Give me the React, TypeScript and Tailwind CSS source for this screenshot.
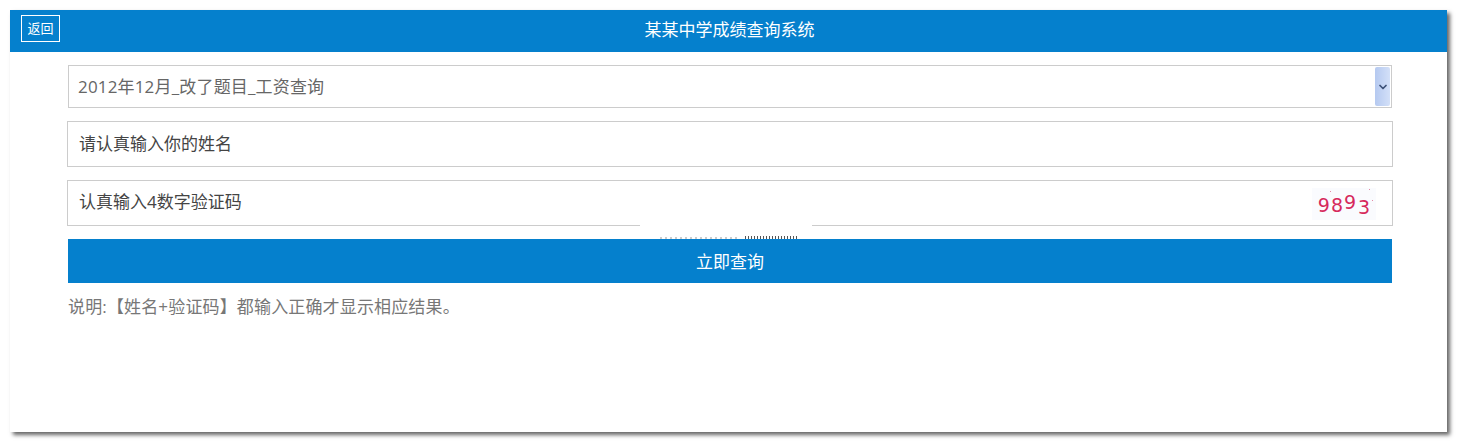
import { ChevronDown } from "lucide-react";

const font = "font-['Open_Sans','Noto_Sans_CJK_SC',sans-serif]";

function Captcha() {
  return (
    <div className="relative flex h-[32px] w-[64px] translate-y-[1px] items-center justify-center gap-[1px] bg-[#fafbfe] font-['DejaVu_Sans',sans-serif] text-[19px] leading-none text-[#d6295c]">
      <span className="translate-y-[1px]">9</span>
      <span className="translate-y-[1px]">8</span>
      <span className="-translate-y-[2px]">9</span>
      <span className="translate-y-[3px] pl-[1px]">3</span>
      <span className="absolute left-[18px] top-[3px] h-[1px] w-[1px] bg-[#e58aa5]" />
      <span className="absolute right-[3px] top-[12px] h-[1px] w-[1px] bg-[#e58aa5]" />
      <span className="absolute right-[6px] top-[1px] h-[1px] w-[1px] bg-[#e58aa5]" />
    </div>
  );
}

export default function App() {
  return (
    <div className={`h-[443px] w-[1457px] overflow-hidden bg-white pl-[10px] pt-[10px] ${font}`}>
      <div className="relative h-[422px] w-[1437px] bg-white shadow-[3px_3px_4px_#666]">
        <div className="relative flex h-[42px] items-center justify-center bg-[#0580cd] pl-[2px] text-[17px] text-white">
          <button className="absolute left-[11px] top-[5px] flex h-[27px] w-[39px] items-center justify-center border border-white text-[13px] text-white">
            返回
          </button>
          <span className="-translate-y-[1px]">某某中学成绩查询系统</span>
        </div>

        <div className="flex flex-col gap-[13px] pl-[57px] pt-[13px]">
          <div className="ml-[1px] flex h-[43px] w-[1324px] items-center justify-between border border-[#ccc] pl-[9px] pr-[1px] text-[17px] text-[#666]">
            <span className="tracking-[0.17px]">2012年12月_改了题目_工资查询</span>
            <div className="flex h-[39px] w-[15px] items-center justify-center rounded-[2px] bg-[linear-gradient(90deg,#b5c9f0,#d3e0f8)]">
              <ChevronDown size={12} strokeWidth={3.5} className="text-[#3d5278]" />
            </div>
          </div>
          <div className="flex h-[46px] w-[1326px] items-center border border-[#ccc] pl-[11px] text-[17px] text-[#444]">
            请认真输入你的姓名
          </div>
          <div className="flex h-[46px] w-[1326px] items-center justify-between border border-[#ccc] pl-[11px] pr-[16px] text-[17px] text-[#444]">
            <span className="-translate-y-[1px]">认真输入4数字验证码</span>
            <Captcha />
          </div>
          <button className="ml-[1px] flex h-[44px] w-[1324px] items-center justify-center bg-[#0580cd] text-[17px] text-white">
            <span className="translate-y-[1px]">立即查询</span>
          </button>
        </div>
        <p className="ml-[58px] mt-[11px] text-[17px] leading-[26px] tracking-[0.15px] text-[#777]">
          说明:【姓名+验证码】都输入正确才显示相应结果。
        </p>

        {/* white patch over the input's edge, with the illegible remains of a cut-off line */}
        <div className="absolute left-[630px] top-[215px] flex h-[14px] w-[172px] items-end gap-[5px] bg-white pl-[20px]">
          <div className="h-[2px] w-[80px] bg-[repeating-linear-gradient(90deg,#ccc_0,#ccc_2px,transparent_2px,transparent_5px)]" />
          <div className="h-[3px] w-[53px] bg-[repeating-linear-gradient(90deg,#555_0,#555_1px,transparent_1px,transparent_3px)]" />
        </div>
      </div>
    </div>
  );
}
